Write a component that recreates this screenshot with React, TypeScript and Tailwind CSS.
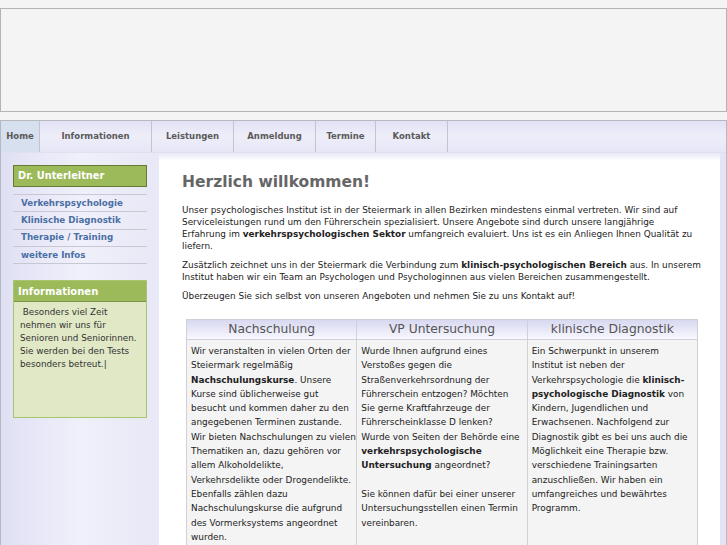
import React from "react";

const tabs = [
  { label: "Home", w: "w-[39px]", active: true },
  { label: "Informationen", w: "w-[112px]" },
  { label: "Leistungen", w: "w-[82px]" },
  { label: "Anmeldung", w: "w-[82px]" },
  { label: "Termine", w: "w-[60px]" },
  { label: "Kontakt", w: "w-[72px]" },
];

const links = ["Verkehrspsychologie", "Klinische Diagnostik", "Therapie / Training", "weitere Infos"];

export default function App() {
  return (
    <div className="min-h-[545px] bg-[#f4f4f4] pt-[8px] font-['DejaVu_Sans',sans-serif] text-[#222] overflow-hidden">
      {/* banner */}
      <div className="h-[104px] border border-[#b4b4b4] bg-[#f4f4f4]" />

      <div className="mt-[8px] border-l border-r border-t border-[#b8b8c0]">
        {/* nav */}
        <div className="flex h-[32px] bg-gradient-to-b from-[#e2e2f6] via-[#eeeefa] to-[#e6e6f6] border-b border-[#e0e0ee]">
          {tabs.map((t) => (
            <div
              key={t.label}
              className={`${t.w} flex items-center justify-center border-r border-[#c4c4cc] text-[8.5px] font-bold text-[#5a5a5a] ${
                t.active ? "bg-[#d6e0ee]" : ""
              }`}
            >
              {t.label}
            </div>
          ))}
        </div>

        <div className="flex">
          {/* sidebar */}
          <div className="w-[158px] shrink-0 bg-gradient-to-r from-[#e0e0f4] via-[#f0f0fb] to-[#e8e8f6] px-[12px] pt-[12px] pb-[130px]">
            <div className="h-[22px] bg-[#9cba5a] border border-[#667a36] flex items-center px-[4px] text-[9.8px] font-bold text-white">
              Dr. Unterleitner
            </div>
            <div className="mt-[7px] border-t border-[#c8c8d4]">
              {links.map((l) => (
                <div key={l} className="h-[17.3px] border-b border-[#c8c8d4] flex items-center pl-[8px] text-[8.7px] font-bold text-[#4a6fa4]">
                  {l}
                </div>
              ))}
            </div>
            <div className="mt-[16px] h-[138px] border border-[#a8c46c] bg-[#e0e8c6]">
              <div className="h-[21px] bg-[#9cba5a] border-b border-[#7d9548] flex items-center px-[4px] text-[10px] font-bold text-white">
                Informationen
              </div>
              <p className="px-[6px] pt-[4px] text-[8.8px] leading-[13px] text-[#333]">
                &nbsp;Besonders viel Zeit nehmen wir uns für Senioren und Seniorinnen. Sie werden bei den Tests besonders betreut.|
              </p>
            </div>
          </div>

          {/* main */}
          <div className="flex-1 bg-white pl-[23px] pr-[16px] pt-[20px] bg-gradient-to-b from-[#e8e8f8] to-white bg-no-repeat bg-[length:100%_8px]">
            <h1 className="text-[15.5px] font-bold text-[#666] leading-[18px]">Herzlich willkommen!</h1>
            <div className="mt-[13px] text-[8.9px] leading-[12px] text-[#222]">
              <p>
                Unser psychologisches Institut ist in der Steiermark in allen Bezirken mindestens einmal vertreten. Wir sind auf Serviceleistungen rund um den Führerschein spezialisiert. Unsere Angebote sind durch unsere langjährige
                <br />
                Erfahrung im <b>verkehrspsychologischen Sektor</b> umfangreich evaluiert. Uns ist es ein Anliegen Ihnen Qualität zu liefern.
              </p>
              <p className="mt-[7px]">
                Zusätzlich zeichnet uns in der Steiermark die Verbindung zum <b>klinisch-psychologischen Bereich</b> aus. In unserem Institut haben wir ein Team an Psychologen und Psychologinnen aus vielen Bereichen zusammengestellt.
              </p>
              <p className="mt-[7px]">Überzeugen Sie sich selbst von unseren Angeboten und nehmen Sie zu uns Kontakt auf!</p>
            </div>

            <div className="mt-[17px] ml-[4px] mr-[6px] grid grid-cols-3 border-l border-t border-[#d0d0d8]">
              {["Nachschulung", "VP Untersuchung", "klinische Diagnostik"].map((h) => (
                <div key={h} className="h-[20px] flex items-center justify-center border-r border-b border-[#d0d0d8] bg-gradient-to-b from-[#d8d8f0] to-[#f8f8ff] text-[12.3px] text-[#555]">
                  {h}
                </div>
              ))}
              <div className="border-r border-[#d0d0d8] bg-[#f4f4f4] pl-[4px] pr-[2px] pt-[4px] pb-[10px] text-[8.9px] leading-[14.3px]">
                Wir veranstalten in vielen Orten der Steiermark regelmäßig <b>Nachschulungskurse</b>. Unsere Kurse sind üblicherweise gut besucht und kommen daher zu den angegebenen Terminen zustande.{" "}
                <span className="whitespace-nowrap">Wir bieten Nachschulungen zu vielen</span> Thematiken an, dazu gehören vor allem Alkoholdelikte, Verkehrsdelikte oder Drogendelikte. Ebenfalls zählen dazu Nachschulungskurse die aufgrund des Vormerksystems angeordnet wurden.
              </div>
              <div className="border-r border-[#d0d0d8] bg-[#f4f4f4] pl-[4px] pr-[2px] pt-[4px] text-[8.9px] leading-[14.3px]">
                <p>
                  Wurde Ihnen aufgrund eines Verstoßes gegen die Straßenverkehrsordnung der Führerschein entzogen? Möchten Sie gerne Kraftfahrzeuge der Führerscheinklasse D lenken?
                  <br />
                  Wurde von Seiten der Behörde eine <b>verkehrspsychologische Untersuchung</b> angeordnet?
                </p>
                <p className="mt-[14.3px]">Sie können dafür bei einer unserer Untersuchungsstellen einen Termin vereinbaren.</p>
              </div>
              <div className="border-r border-[#d0d0d8] bg-[#f4f4f4] pl-[4px] pr-[4px] pt-[4px] text-[8.9px] leading-[14.3px]">
                Ein Schwerpunkt in unserem Institut ist neben der Verkehrspsychologie die <b>klinisch-psychologische Diagnostik</b> von Kindern, Jugendlichen und Erwachsenen. Nachfolgend zur Diagnostik gibt es bei uns auch die Möglichkeit eine Therapie bzw. verschiedene Trainingsarten anzuschließen. Wir haben ein umfangreiches und bewährtes Programm.
              </div>
            </div>
          </div>
          <div className="w-[6px] shrink-0 bg-[#e4e4f4]" />
        </div>
      </div>
    </div>
  );
}
